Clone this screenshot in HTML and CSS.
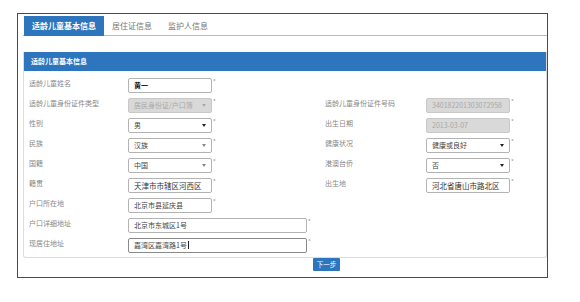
FILE: index.html
```html
<!DOCTYPE html>
<html lang="zh-CN">
<head>
<meta charset="utf-8">
<title>适龄儿童基本信息</title>
<link rel="stylesheet" href="styles.css">
</head>
<body>
<div class="frame">
  <div class="tabs">
    <div class="tab active">适龄儿童基本信息</div>
    <div class="tab">居住证信息</div>
    <div class="tab">监护人信息</div>
  </div>
  <div class="panel">
    <div class="panel-head">适龄儿童基本信息</div>
    <div class="panel-body">
      <div class="row">
        <div class="label">适龄儿童姓名</div>
        <div class="field"><div class="input dark">黄一</div><span class="req">*</span></div>
      </div>
      <div class="row">
        <div class="label">适龄儿童身份证件类型</div>
        <div class="field"><div class="input select disabled">居民身份证/户口簿<i class="arrow light"></i></div><span class="req">*</span></div>
        <div class="label">适龄儿童身份证件号码</div>
        <div class="field"><div class="input disabled">340182201303072958</div><span class="req">*</span></div>
      </div>
      <div class="row">
        <div class="label">性别</div>
        <div class="field"><div class="input select">男<i class="arrow"></i></div><span class="req">*</span></div>
        <div class="label">出生日期</div>
        <div class="field"><div class="input disabled">2013-03-07</div><span class="req">*</span></div>
      </div>
      <div class="row">
        <div class="label">民族</div>
        <div class="field"><div class="input select">汉族<i class="arrow mid"></i></div><span class="req">*</span></div>
        <div class="label">健康状况</div>
        <div class="field"><div class="input select">健康或良好<i class="arrow"></i></div><span class="req">*</span></div>
      </div>
      <div class="row">
        <div class="label">国籍</div>
        <div class="field"><div class="input select">中国<i class="arrow mid"></i></div><span class="req">*</span></div>
        <div class="label">港澳台侨</div>
        <div class="field"><div class="input select">否<i class="arrow"></i></div><span class="req">*</span></div>
      </div>
      <div class="row">
        <div class="label">籍贯</div>
        <div class="field"><div class="input big">天津市市辖区河西区</div><span class="req">*</span></div>
        <div class="label">出生地</div>
        <div class="field"><div class="input big">河北省唐山市路北区</div><span class="req">*</span></div>
      </div>
      <div class="row">
        <div class="label">户口所在地</div>
        <div class="field"><div class="input">北京市县延庆县</div><span class="req">*</span></div>
      </div>
      <div class="row">
        <div class="label">户口详细地址</div>
        <div class="field wide"><div class="input">北京市东城区1号</div><span class="req">*</span></div>
      </div>
      <div class="row">
        <div class="label">现居住地址</div>
        <div class="field wide"><div class="input focus">嘉湾区嘉湾路1号<span class="caret"></span></div><span class="req">*</span></div>
      </div>
    </div>
  </div>
  <div class="actions"><button class="btn">下一步</button></div>
</div>
</body>
</html>
```
FILE: styles.css
```css
* { box-sizing: border-box; }
html, body { margin: 0; padding: 0; background: #fff; }
body {
  font-family: "Noto Sans CJK SC", "Noto Sans", "Liberation Sans", sans-serif;
  color: #555;
}
.frame {
  margin: 13px 0 0 17px;
  width: 531px;
  border: 1px solid #4a4a4a;
  padding: 2px 0 6px 5px;
}
.tabs {
  display: flex;
  height: 20px;
  border-bottom: 1px solid #b4bcc4;
  padding-left: 1px;
}
.tab {
  height: 20px;
  padding: 0 8px;
  font-size: 8px;
  line-height: 19px;
  color: #777;
  white-space: nowrap;
}
.tab.active {
  background: #2d76bd;
  color: #fff;
  font-weight: bold;
}
.panel {
  margin-top: 16px;
  border: 1px solid #dcdcdc;
  border-top: 0;
  border-radius: 0 0 3px 3px;
}
.panel-head {
  height: 19px;
  background: #2d76bd;
  color: #fff;
  font-size: 7px;
  font-weight: bold;
  line-height: 19px;
  padding-left: 7px;
}
.panel-body {
  padding: 4px 0 2px 5px;
}
.row {
  display: grid;
  grid-template-columns: 99px 197px 101px 1fr;
  height: 20px;
  align-items: start;
}
.label {
  font-size: 7px;
  line-height: 16px;
  color: #888;
  white-space: nowrap;
}
.field {
  display: flex;
  align-items: flex-start;
  padding-top: 2.5px;
}
.field.wide { grid-column: 2 / 4; }
.input {
  position: relative;
  width: 84px;
  height: 15px;
  border: 1px solid #b3b3b3;
  border-radius: 2px;
  background: #fff;
  font-size: 7px;
  line-height: 13px;
  padding-left: 5px;
  color: #444;
  white-space: nowrap;
  overflow: hidden;
}
.input.big { font-size: 7.5px; color: #333; }
.input.dark { color: #222; font-weight: bold; }
.field.wide .input { width: 179px; }
.input.focus { border-color: #8a8a8a; }
.input.disabled {
  background: #d9d9d9;
  border-color: #c8c8c8;
  color: #a8a8a8;
}
.arrow {
  position: absolute;
  right: 5px;
  top: 5px;
  width: 0;
  height: 0;
  border-left: 2px solid transparent;
  border-right: 2px solid transparent;
  border-top: 3px solid #222;
}
.arrow.mid { border-top-color: #888; }
.arrow.light { border-top-color: #aaa; }
.caret {
  display: inline-block;
  width: 1px;
  height: 8px;
  background: #222;
  vertical-align: -1px;
  margin-left: 1px;
}
.req {
  font-size: 6px;
  line-height: 6px;
  color: #999;
  margin-left: 1px;
  margin-top: 1px;
}
.actions {
  padding-left: 290px;
}
.btn {
  display: block;
  width: 27px;
  height: 13px;
  padding: 0;
  border: 0;
  border-radius: 1px;
  background: #2d76bd;
  color: #fff;
  font-family: "Noto Sans CJK SC", "Noto Sans", sans-serif;
  font-size: 6.5px;
  line-height: 13px;
  text-align: center;
}
```
